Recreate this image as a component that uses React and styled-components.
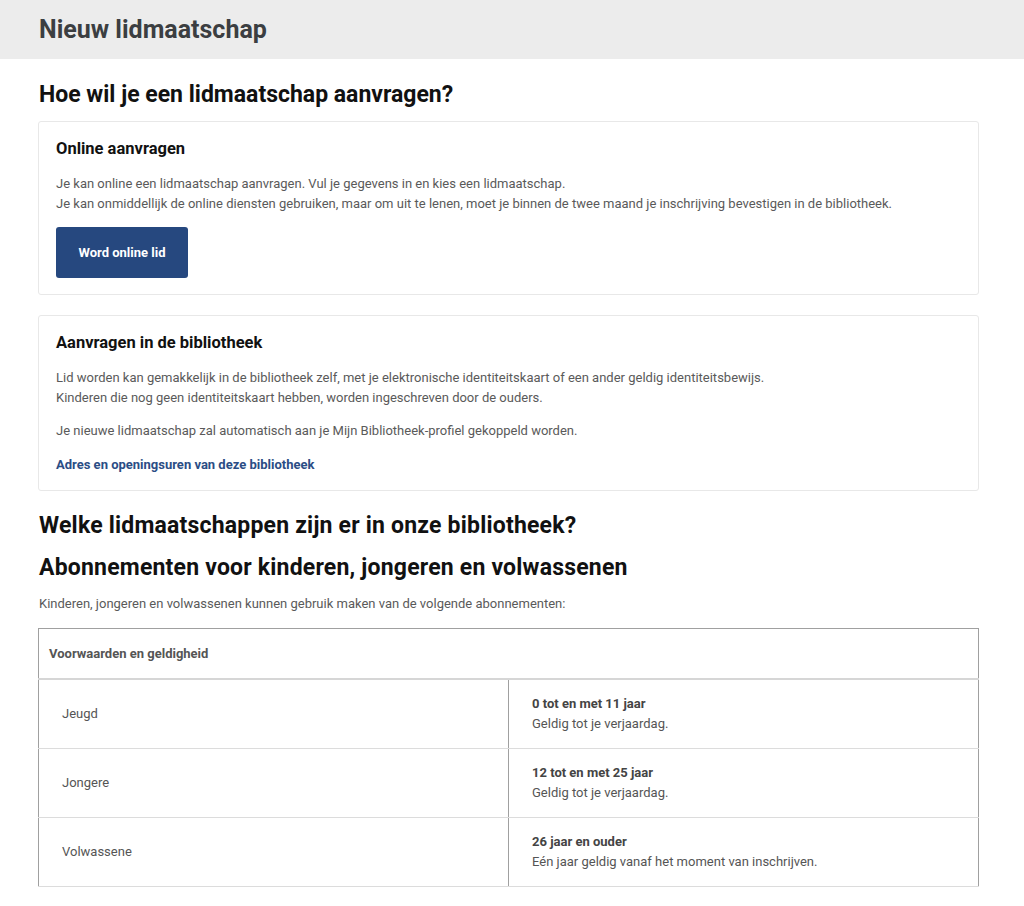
import React from "react";
import styled, { createGlobalStyle } from "styled-components";

const GlobalStyle = createGlobalStyle`
body{
    margin:0;
    background:#fff;
    font-family: Roboto, "Noto Sans", "Liberation Sans", sans-serif;
    color:#555;
}
*{ box-sizing:border-box; }
`;

const rows = [
    { name: "Jeugd", age: "0 tot en met 11 jaar", note: "Geldig tot je verjaardag." },
    { name: "Jongere", age: "12 tot en met 25 jaar", note: "Geldig tot je verjaardag." },
    { name: "Volwassene", age: "26 jaar en ouder", note: "Eén jaar geldig vanaf het moment van inschrijven." },
];

const App = () => {
    return (
        <>
            <GlobalStyle />
            <TopBar>
                <h1>Nieuw lidmaatschap</h1>
            </TopBar>
            <Page>
                <Heading>Hoe wil je een lidmaatschap aanvragen?</Heading>
                <Card>
                    <h3>Online aanvragen</h3>
                    <p>
                        Je kan online een lidmaatschap aanvragen. Vul je gegevens in en kies een lidmaatschap.
                        <br />
                        Je kan onmiddellijk de online diensten gebruiken, maar om uit te lenen, moet je binnen de twee maand je inschrijving bevestigen in de bibliotheek.
                    </p>
                    <Button>Word online lid</Button>
                </Card>
                <Card>
                    <h3>Aanvragen in de bibliotheek</h3>
                    <p>
                        Lid worden kan gemakkelijk in de bibliotheek zelf, met je elektronische identiteitskaart of een ander geldig identiteitsbewijs.
                        <br />
                        Kinderen die nog geen identiteitskaart hebben, worden ingeschreven door de ouders.
                    </p>
                    <p>Je nieuwe lidmaatschap zal automatisch aan je Mijn Bibliotheek-profiel gekoppeld worden.</p>
                    <LinkText href="#">Adres en openingsuren van deze bibliotheek</LinkText>
                </Card>
                <SubHeading>Welke lidmaatschappen zijn er in onze bibliotheek?</SubHeading>
                <SubHeading>Abonnementen voor kinderen, jongeren en volwassenen</SubHeading>
                <Intro>Kinderen, jongeren en volwassenen kunnen gebruik maken van de volgende abonnementen:</Intro>
                <Table>
                    <thead>
                        <tr>
                            <th colSpan={2}>Voorwaarden en geldigheid</th>
                        </tr>
                    </thead>
                    <tbody>
                        {rows.map((r) => (
                            <tr key={r.name}>
                                <td>{r.name}</td>
                                <td>
                                    <strong>{r.age}</strong>
                                    <span>{r.note}</span>
                                </td>
                            </tr>
                        ))}
                    </tbody>
                </Table>
            </Page>
        </>
    );
};

const TopBar = styled.div`
background:#ececec;
height:59px;
display:flex;
align-items:center;
padding-left:39px;
h1{
    margin:0;
    font-size:25px;
    font-weight:700;
    color:#3b3e41;
}
`;

const Page = styled.div`
width:941px;
margin-left:38px;
padding-top:21px;
padding-bottom:20px;
`;

const Heading = styled.h2`
margin:0 0 11px 1px;
font-size:23px;
font-weight:700;
color:#111;
line-height:30px;
`;

const SubHeading = styled.h2`
margin:0 0 12px 1px;
font-size:23px;
font-weight:700;
color:#111;
line-height:30px;
letter-spacing:0.2px;
`;

const Card = styled.div`
border:1px solid #e8e8e8;
border-radius:3px;
padding:16px 16px 16px 17px;
margin-bottom:20px;
h3{
    margin:0 0 14px;
    font-size:16.5px;
    font-weight:700;
    color:#111;
    line-height:22px;
}
p{
    margin:0 0 14px;
    font-size:13px;
    line-height:19.5px;
    color:#5a5a5a;
}
p + p{
    margin-bottom:15px;
}
`;

const Button = styled.button`
width:132px;
height:51px;
border:none;
border-radius:3px;
background:#26487f;
color:#fff;
font-family:inherit;
font-size:13px;
font-weight:700;
cursor:pointer;
margin:0;
`;

const LinkText = styled.a`
display:block;
font-size:13px;
font-weight:700;
color:#2b4d85;
text-decoration:none;
line-height:18px;
`;

const Intro = styled.p`
margin:7px 0 15px 1px;
font-size:13px;
color:#5a5a5a;
line-height:18px;
`;

const Table = styled.table`
width:100%;
border-collapse:collapse;
border:1px solid #a0a0a0;
border-bottom:1px solid #dcdcdc;
th{
    text-align:left;
    font-size:13px;
    font-weight:700;
    color:#555;
    height:51px;
    padding:0 10px;
    border-bottom:2px solid #d6d6d6;
}
td{
    height:69px;
    padding:0 23px;
    font-size:13px;
    color:#555;
    border-bottom:1px solid #dcdcdc;
    vertical-align:middle;
    width:50%;
}
td + td{
    border-left:1px solid #a0a0a0;
}
strong{
    display:block;
    font-weight:700;
    color:#444;
    line-height:20px;
}
span{
    display:block;
    line-height:20px;
}
`;

export default App;
